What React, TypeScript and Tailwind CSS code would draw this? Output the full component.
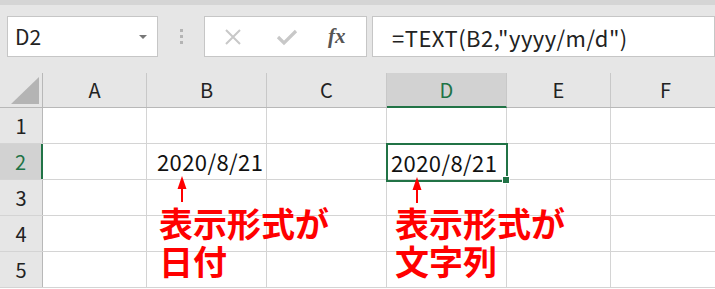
import React from "react";

const FONT = '"Noto Sans CJK JP", "Noto Sans", sans-serif';

const cols = [
  { name: "A", w: 104 },
  { name: "B", w: 120 },
  { name: "C", w: 120 },
  { name: "D", w: 120 },
  { name: "E", w: 104 },
  { name: "F", w: 110 },
];

function Arrow() {
  return (
    <svg width="10" height="26" viewBox="0 0 10 26">
      <polygon points="5,0 9.5,13 0.5,13" fill="#ff0000" />
      <rect x="4" y="12" width="2" height="14" fill="#ff0000" />
    </svg>
  );
}

export default function App() {
  return (
    <div
      className="relative w-[715px] h-[289px] overflow-hidden bg-white"
      style={{ fontFamily: FONT }}
    >
      {/* toolbar */}
      <div className="h-[73px] bg-[#e6e6e6] flex flex-col">
        <div className="h-[5px] bg-[#d5d5d5]" />
        <div className="flex items-start pt-[11px]">
          <div className="ml-[7px] w-[151px] h-[41px] bg-white border border-[#c6c6c6] flex items-center justify-between pl-[7px] pr-[10px]">
            <span className="text-[21px] text-[#222] leading-none">D2</span>
            <svg width="8" height="4" viewBox="0 0 8 4">
              <polygon points="0,0 8,0 4,4" fill="#777" />
            </svg>
          </div>
          <div className="w-[46px] h-[41px] flex flex-col items-center justify-center gap-[3px]">
            <div className="w-[3px] h-[3px] bg-[#b4b4b4]" />
            <div className="w-[3px] h-[3px] bg-[#b4b4b4]" />
            <div className="w-[3px] h-[3px] bg-[#b4b4b4]" />
          </div>
          <div className="w-[163px] h-[41px] bg-white border border-[#c6c6c6] flex items-center pl-[18px]">
            <svg width="20" height="20" viewBox="0 0 20 20">
              <path d="M3 3 L17 17 M17 3 L3 17" stroke="#c8c8c8" strokeWidth="2" />
            </svg>
            <svg className="ml-[33px]" width="22" height="20" viewBox="0 0 22 20">
              <path d="M2 10 L8 16 L20 4" stroke="#c8c8c8" strokeWidth="3.2" fill="none" />
            </svg>
            <span
              className="ml-[30px] text-[21px] italic font-bold text-[#555] leading-none"
              style={{ fontFamily: '"Liberation Serif", serif' }}
            >
              fx
            </span>
          </div>
          <div className="ml-[5px] flex-1 h-[41px] bg-white border border-[#c6c6c6] flex items-center pl-[19px]">
            <span className="text-[22px] text-[#222] leading-none tracking-[0.5px]">
              =TEXT(B2,"yyyy/m/d")
            </span>
          </div>
        </div>
      </div>

      {/* column header */}
      <div className="flex h-[35px] bg-[#e6e6e6] border-b border-[#b8b8b8]">
        <div className="w-[43px] shrink-0 border-r border-[#b8b8b8] flex items-end justify-end pr-[3px] pb-[3px]">
          <svg width="28" height="27" viewBox="0 0 28 27">
            <polygon points="28,0 28,27 0,27" fill="#b4b4b4" />
          </svg>
        </div>
        {cols.map((c) => (
          <div
            key={c.name}
            style={{ width: c.w }}
            className={
              "shrink-0 flex items-center justify-center text-[20px] border-r border-[#c8c8c8] " +
              (c.name === "D"
                ? "bg-[#d2d2d2] text-[#217346] border-b-2 border-b-[#217346] -mb-px"
                : "text-[#222]")
            }
          >
            {c.name}
          </div>
        ))}
      </div>

      {/* rows */}
      {[1, 2, 3, 4, 5].map((r) => (
        <div key={r} className="flex h-[36px] border-b border-[#d4d4d4]">
          <div
            className={
              "w-[43px] shrink-0 flex items-center justify-center text-[20px] border-r " +
              (r === 2
                ? "bg-[#d2d2d2] text-[#217346] border-r-2 border-r-[#217346]"
                : "bg-[#e6e6e6] text-[#222] border-[#b8b8b8]")
            }
          >
            {r}
          </div>
          {cols.map((c) => (
            <div
              key={c.name}
              style={{ width: c.w }}
              className="shrink-0 border-r border-[#d4d4d4] flex items-center pl-[10px] text-[22px] text-[#111] tracking-[0.4px]"
            >
              {r === 2 && c.name === "B" ? "2020/8/21" : null}
            </div>
          ))}
        </div>
      ))}

      {/* selected cell D2 */}
      <div className="absolute left-[386px] top-[143px] w-[122px] h-[39px] border-2 border-[#217346] flex items-center pl-[3px] text-[22px] text-[#111] tracking-[0.4px]">
        2020/8/21
        <div className="absolute right-[-4px] bottom-[-4px] w-[6px] h-[6px] bg-[#217346] border border-white box-content" />
      </div>

      {/* annotation 1 */}
      <div className="absolute left-[177px] top-[176px]">
        <Arrow />
      </div>
      <div className="absolute left-[159px] top-[204px] text-[34px] leading-[38px] font-bold text-[#ff0000]">
        表示形式が
        <br />
        日付
      </div>

      {/* annotation 2 */}
      <div className="absolute left-[412px] top-[177px]">
        <Arrow />
      </div>
      <div className="absolute left-[395px] top-[204px] text-[34px] leading-[38px] font-bold text-[#ff0000]">
        表示形式が
        <br />
        文字列
      </div>
    </div>
  );
}
